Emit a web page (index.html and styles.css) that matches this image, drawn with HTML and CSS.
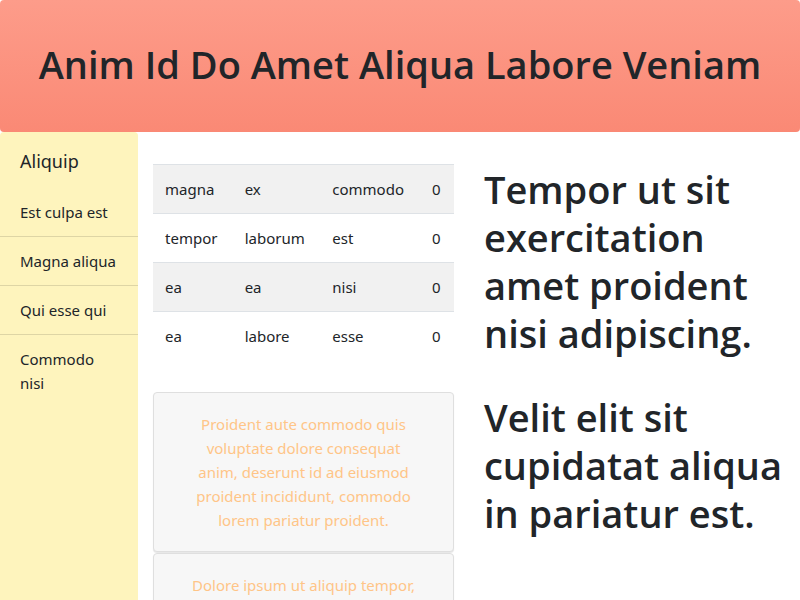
FILE: index.html
```html
<!DOCTYPE html>
<html lang="la">
<head>
<meta charset="utf-8">
<title>Anim Id Do Amet Aliqua Labore Veniam</title>
<link rel="stylesheet" href="styles.css">
</head>
<body>
<header class="hero"><h1>Anim Id Do Amet Aliqua Labore Veniam</h1></header>
<div class="layout">
  <nav class="sidebar">
    <h2 class="sidebar-title">Aliquip</h2>
    <ul class="menu">
      <li><a href="#">Est culpa est</a></li>
      <li><a href="#">Magna aliqua</a></li>
      <li><a href="#">Qui esse qui</a></li>
      <li><a href="#">Commodo nisi</a></li>
    </ul>
  </nav>
  <main class="content">
    <section class="column">
      <table class="table">
        <tbody>
          <tr><td>magna</td><td>ex</td><td>commodo</td><td>0</td></tr>
          <tr><td>tempor</td><td>laborum</td><td>est</td><td>0</td></tr>
          <tr><td>ea</td><td>ea</td><td>nisi</td><td>0</td></tr>
          <tr><td>ea</td><td>labore</td><td>esse</td><td>0</td></tr>
        </tbody>
      </table>
      <div class="cards">
        <article class="card"><p>Proident aute commodo quis voluptate dolore consequat anim, deserunt id ad eiusmod proident incididunt, commodo lorem pariatur proident.</p></article>
        <article class="card"><p>Dolore ipsum ut aliquip tempor,</p></article>
      </div>
    </section>
    <section class="column headlines">
      <h2>Tempor ut sit exercitation amet proident nisi adipiscing.</h2>
      <h2>Velit elit sit cupidatat aliqua in pariatur est.</h2>
    </section>
  </main>
</div>
</body>
</html>
```
FILE: styles.css
```css
* { box-sizing: border-box; }
html, body { height: 100%; }
body {
  margin: 0;
  display: flex;
  flex-direction: column;
  overflow: hidden;
  font-family: "Noto Sans", "Open Sans", sans-serif;
  font-size: 15px;
  line-height: 24px;
  color: #212529;
  background: #fff;
}
.hero {
  flex: none;
  padding: 40px 32px 44px;
  border-radius: 4px;
  background: linear-gradient(#fd9c8a, #fa8975);
  text-align: center;
}
.hero h1,
.headlines h2 {
  margin: 0;
  font-family: "Open Sans", "Noto Sans", sans-serif;
  font-size: 38px;
  line-height: 48px;
  font-weight: 600;
}
.layout { display: flex; flex: 1; min-height: 0; }
.sidebar {
  flex: none;
  width: 138px;
  border-radius: 4px 4px 0 0;
  background: #fef4bd;
}
.sidebar-title {
  margin: 0;
  padding: 17px 20px 15px;
  font-size: 18px;
  line-height: 24px;
  font-weight: 400;
}
.menu { margin: 0; padding: 0; list-style: none; }
.menu li + li { border-top: 1px solid rgba(0, 0, 0, .125); }
.menu a {
  display: block;
  padding: 12px 20px;
  color: inherit;
  text-decoration: none;
}
.content { display: flex; flex: 1; min-width: 0; gap: 30px; padding: 32px 15px 0; }
.column { flex: 1; min-width: 0; }
.table {
  width: 100%;
  border-collapse: collapse;
}
.table td { padding: 12px; border-top: 1px solid #dee2e6; }
.table tr:nth-child(odd) { background: #f1f1f1; }
.cards { display: grid; gap: 1px; margin-top: 32px; }
.card {
  padding: 19px;
  border: 1px solid #dfdfdf;
  border-radius: 4px;
  background: #f7f7f7;
  box-shadow: 0 1px 1px rgba(0, 0, 0, .1);
  text-align: center;
  color: #ffc587;
}
.card p { margin: 0 auto; max-width: 230px; }
.headlines { padding-top: 1px; }
.headlines h2 + h2 { margin-top: 36px; }
```
